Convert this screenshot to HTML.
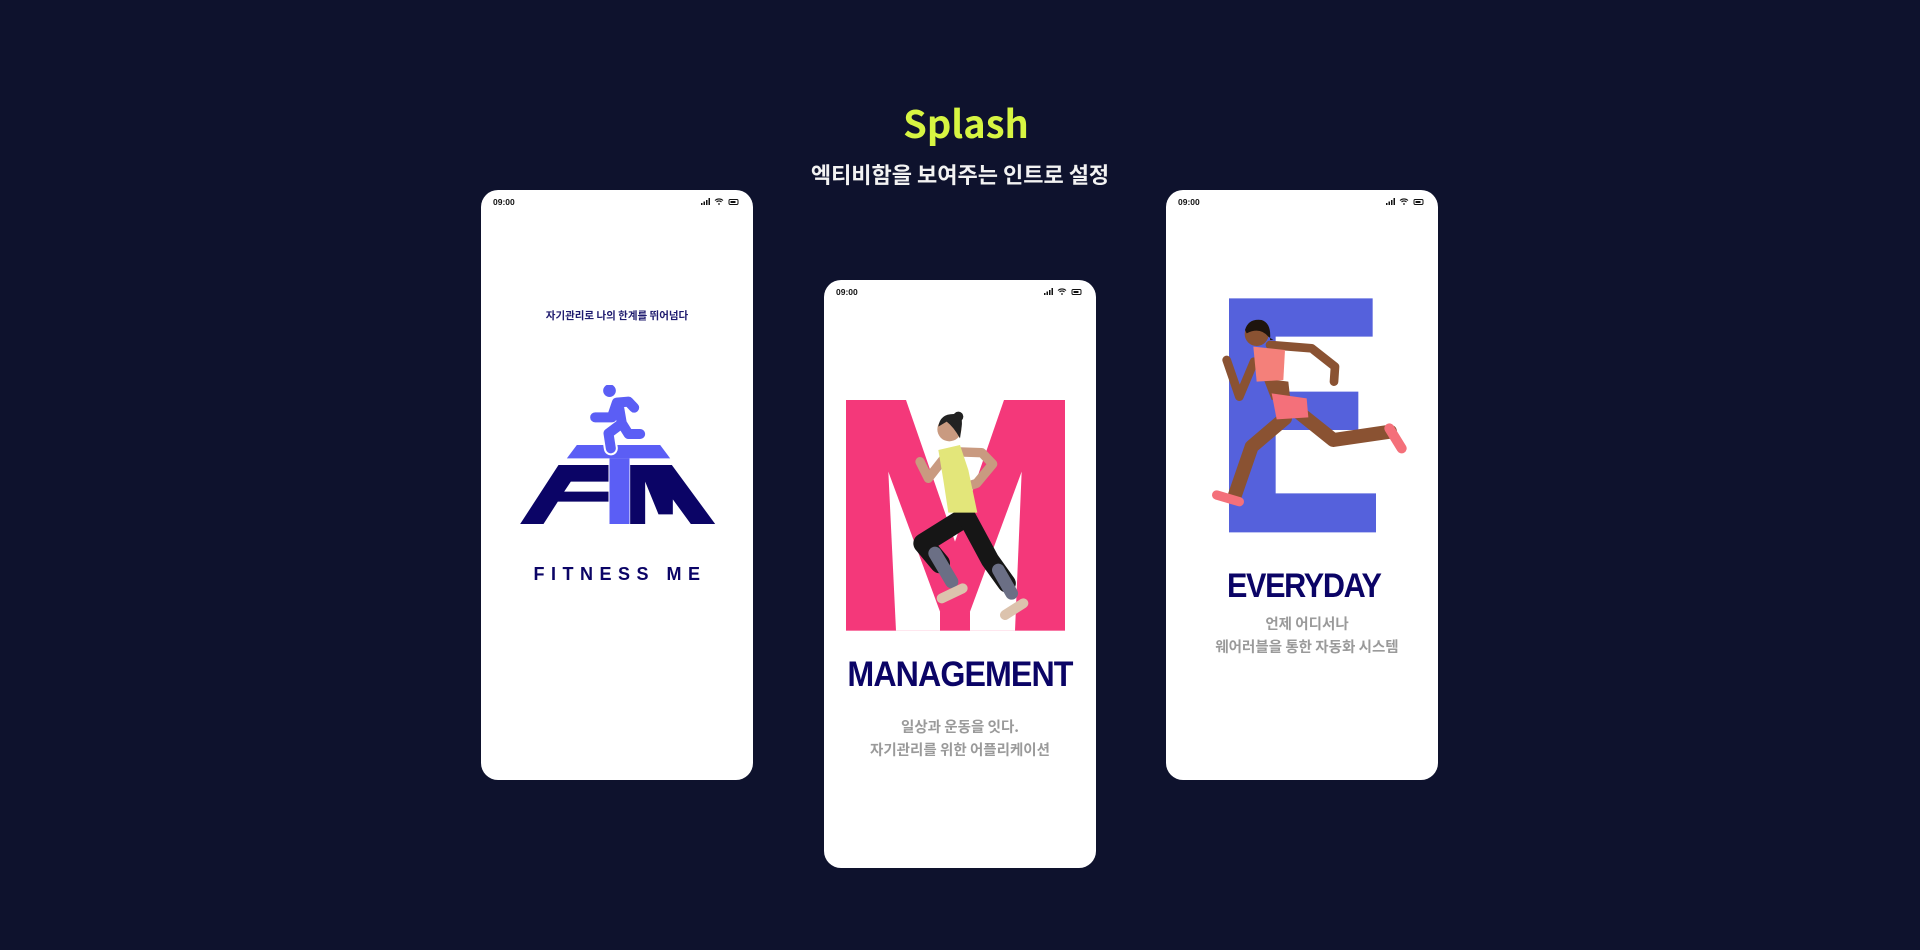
<!DOCTYPE html>
<html><head><meta charset="utf-8"><style>
*{margin:0;padding:0;box-sizing:border-box}
body{width:1920px;height:950px;background:#0e122d;position:relative;overflow:hidden;font-family:"Liberation Sans","Noto Sans CJK KR",sans-serif}
.t{position:absolute;left:0;width:1920px;text-align:center;font-family:"Noto Sans CJK KR","Liberation Sans",sans-serif;font-weight:700}
.ph{position:absolute;width:272px;height:590px;background:#fff;border-radius:17px;overflow:hidden}
.st{position:absolute;top:7px;left:12px;font-size:8.5px;font-weight:700;color:#111}
.ic{position:absolute;top:7px;right:12px}
.ab{position:absolute;left:0;width:272px;text-align:center;font-family:"Noto Sans CJK KR","Liberation Sans",sans-serif;font-weight:700}
</style></head><body>
<div class="t" style="top:94px;font-size:38px;color:#d7f542;left:6px">Splash</div>
<div class="t" style="top:158px;font-size:22px;color:#f2f2f2">엑티비함을 보여주는 인트로 설정</div>

<!-- phone 1 -->
<div class="ph" style="left:481px;top:190px">
<div class="st">09:00</div>
<svg class="ic" width="40" height="9" viewBox="0 0 40 9"><rect x="0" y="6" width="1.5" height="2" fill="#111"/><rect x="2.5" y="4.5" width="1.5" height="3.5" fill="#111"/><rect x="5" y="3" width="1.5" height="5" fill="#111"/><rect x="7.5" y="1" width="1.5" height="7" fill="#111"/><path d="M14 3.5a6 6 0 0 1 8 0M15.5 5a3.5 3.5 0 0 1 5 0" stroke="#111" stroke-width="1.1" fill="none"/><circle cx="18" cy="7" r="0.9" fill="#111"/><rect x="28" y="2.5" width="9" height="5" rx="1.2" stroke="#111" stroke-width="1" fill="none"/><rect x="29.5" y="4" width="5" height="2" fill="#111"/></svg>
<div class="ab" style="top:118px;font-size:10.5px;color:#1e1a6e">자기관리로 나의 한계를 뛰어넘다</div>
<svg style="position:absolute;left:39px;top:195px" width="197" height="140" viewBox="120 615 590 420">
<path d="M290 795H540L570 835H260Z" fill="#5b5ef5"/>
<rect x="388" y="835" width="60" height="197" fill="#5b5ef5"/>
<path d="M235 855H385V905H272L252 935H385V965H233L190 1032H120Z" fill="#0b0466"/>
<path d="M450 855H575L705 1032H632L578 958V1003H535L495 905V1032H450Z" fill="#0b0466"/>
<g stroke="#fff" stroke-width="42" stroke-linecap="round" stroke-linejoin="round" fill="none"><path d="M345 712H395L410 668L445 665L462 683M415 672L425 730L445 762H480M425 730L385 760L392 805"/></g>
<g stroke="#5b5ef5" stroke-width="30" stroke-linecap="round" stroke-linejoin="round" fill="none"><path d="M345 712H395L410 668L445 665L462 683M415 672L425 730L445 762H480M425 730L385 760L392 805"/></g>
<circle cx="388" cy="632" r="19" fill="#5b5ef5"/>
</svg>
<div class="ab" style="top:374px;font-size:18px;letter-spacing:6.5px;color:#0b0466;padding-left:6px;font-family:'Liberation Sans',sans-serif;font-weight:700">FITNESS ME</div>
</div>

<!-- phone 2 -->
<div class="ph" style="left:824px;top:280px;height:588px">
<div class="st">09:00</div>
<svg class="ic" width="40" height="9" viewBox="0 0 40 9"><rect x="0" y="6" width="1.5" height="2" fill="#111"/><rect x="2.5" y="4.5" width="1.5" height="3.5" fill="#111"/><rect x="5" y="3" width="1.5" height="5" fill="#111"/><rect x="7.5" y="1" width="1.5" height="7" fill="#111"/><path d="M14 3.5a6 6 0 0 1 8 0M15.5 5a3.5 3.5 0 0 1 5 0" stroke="#111" stroke-width="1.1" fill="none"/><circle cx="18" cy="7" r="0.9" fill="#111"/><rect x="28" y="2.5" width="9" height="5" rx="1.2" stroke="#111" stroke-width="1" fill="none"/><rect x="29.5" y="4" width="5" height="2" fill="#111"/></svg>
<svg style="position:absolute;left:-4px;top:-10px" width="280" height="500" viewBox="0 0 840 1500">
<rect x="78" y="390" width="657" height="692" fill="#f4387a"/>
<path d="M258 390H552L405 815Z" fill="#fff"/>
<path d="M205 605L360 1025V1082H228Z" fill="#fff"/>
<path d="M605 605L450 1025V1082H585Z" fill="#fff"/>
<g stroke-linecap="round" stroke-linejoin="round" fill="none">
<path d="M400 545L485 548L518 582L470 640L440 650" stroke="#c99a80" stroke-width="28"/>
<path d="M372 565L325 625L300 575" stroke="#c99a80" stroke-width="28"/>
<path d="M430 745L310 820L360 880" stroke="#161616" stroke-width="60"/>
<path d="M440 740L510 870L560 940" stroke="#161616" stroke-width="55"/>
<path d="M345 850L395 935" stroke="#6b6f85" stroke-width="40"/>
<path d="M535 900L575 970" stroke="#6b6f85" stroke-width="38"/>
<path d="M365 985L428 955" stroke="#dcc3ad" stroke-width="30"/>
<path d="M555 1035L610 1000" stroke="#dcc3ad" stroke-width="30"/>
</g>
<path d="M355 540L420 525L445 600L472 728L385 728L370 630Z" fill="#e3e67a"/>
<circle cx="388" cy="478" r="36" fill="#c99a80"/>
<path d="M355 470Q360 430 405 432Q430 435 425 470L420 505Q400 470 380 455Z" fill="#222"/>
<circle cx="415" cy="440" r="15" fill="#222"/>
</svg>
<div class="ab" style="top:375px;font-size:35px;color:#0b0466;letter-spacing:-1px;font-family:'Liberation Sans',sans-serif;transform:scaleX(0.92)">MANAGEMENT</div>
<div class="ab" style="top:435px;font-size:14.5px;color:#9a9a9a;line-height:23px">일상과 운동을 잇다.<br>자기관리를 위한 어플리케이션</div>
</div>

<!-- phone 3 -->
<div class="ph" style="left:1166px;top:190px;height:590px">
<div class="st">09:00</div>
<svg class="ic" width="40" height="9" viewBox="0 0 40 9"><rect x="0" y="6" width="1.5" height="2" fill="#111"/><rect x="2.5" y="4.5" width="1.5" height="3.5" fill="#111"/><rect x="5" y="3" width="1.5" height="5" fill="#111"/><rect x="7.5" y="1" width="1.5" height="7" fill="#111"/><path d="M14 3.5a6 6 0 0 1 8 0M15.5 5a3.5 3.5 0 0 1 5 0" stroke="#111" stroke-width="1.1" fill="none"/><circle cx="18" cy="7" r="0.9" fill="#111"/><rect x="28" y="2.5" width="9" height="5" rx="1.2" stroke="#111" stroke-width="1" fill="none"/><rect x="29.5" y="4" width="5" height="2" fill="#111"/></svg>
<svg style="position:absolute;left:-6px;top:-10px" width="280" height="500" viewBox="0 0 840 1500">
<path d="M207 355H638V470H347V635H595V750H347V940H648V1057H207Z" fill="#5561dc"/>
<g stroke-linecap="round" stroke-linejoin="round" fill="none" stroke="#8a5232">
<path d="M330 495L455 505L525 560L522 605" stroke-width="26"/>
<path d="M282 545L238 650L200 540" stroke-width="26"/>
<path d="M420 700L520 780L690 755" stroke-width="42"/>
<path d="M375 715L275 800L225 945" stroke-width="42"/>
<path d="M170 945L238 965" stroke="#f4707a" stroke-width="28"/>
<path d="M688 745L725 805" stroke="#f4707a" stroke-width="30"/>
</g>
<path d="M310 595L385 605L390 650L335 660Z" fill="#8a5232"/>
<path d="M280 500L375 510L370 600L290 605Z" fill="#f4807a"/>
<path d="M335 640L440 655L445 712L350 718Z" fill="#f4707a"/>
<circle cx="290" cy="462" r="36" fill="#8a5232"/>
<path d="M255 450Q265 415 305 420Q335 430 330 480L340 480L325 470Q300 440 260 460Z" fill="#1e140e"/>
</svg>
<div class="ab" style="top:377px;font-size:34px;color:#0b0466;letter-spacing:-1.5px;font-family:'Liberation Sans',sans-serif;transform:scaleX(0.9);padding-left:4px">EVERYDAY</div>
<div class="ab" style="top:422px;font-size:14.5px;color:#9a9a9a;line-height:23px;padding-left:10px">언제 어디서나<br>웨어러블을 통한 자동화 시스템</div>
</div>
</body></html>
